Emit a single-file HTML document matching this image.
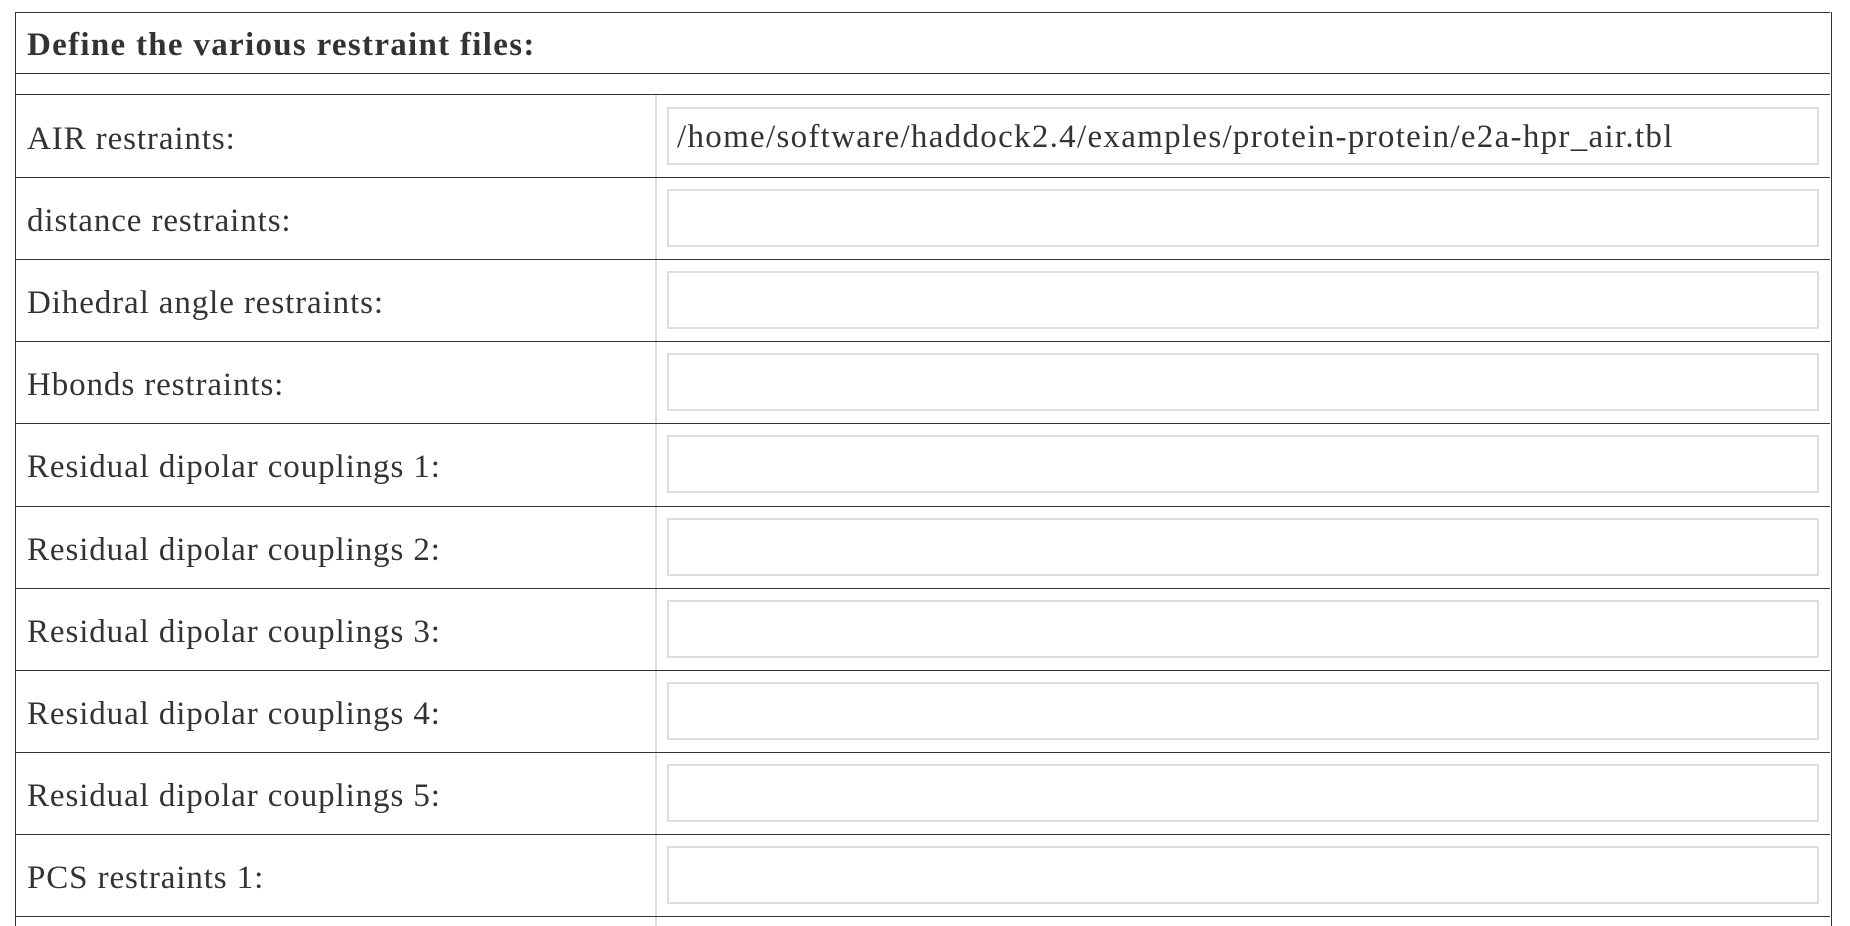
<!DOCTYPE html>
<html><head><style>
html,body{margin:0;padding:0;background:#fff;width:1850px;height:926px;overflow:hidden}
body{font-family:"Liberation Serif",serif;color:#333;position:relative}
.h{position:absolute;left:15px;width:1815px;border-left:1px solid #333;border-right:1px solid #333}
.line{position:absolute;left:15px;width:1815px;height:1px;background:#333}
.lab{position:absolute;left:27px;font-size:33px;line-height:84px;letter-spacing:0.9px;margin-top:2px}
.div{position:absolute;left:655px;width:2px;background:#ddd}
.inp{position:absolute;left:667px;width:1152px;height:58px;border:2px solid #ddd;box-sizing:border-box;font-size:33px;line-height:56px;padding-left:8px;color:#333;letter-spacing:1.3px;white-space:nowrap}
</style></head><body>
<div class="h" style="top:12px;height:914px"></div>
<div class="line" style="top:12px"></div>
<div style="position:absolute;left:27px;top:14px;line-height:62px;font-size:33px;font-weight:bold;letter-spacing:1.3px">Define the various restraint files:</div>
<div class="line" style="top:73px"></div>
<div class="line" style="top:94px"></div>
<div class="div" style="top:95px;height:831px"></div>

<div class="lab" style="top:95px">AIR restraints:</div>
<div class="inp" style="top:107px">/home/software/haddock2.4/examples/protein-protein/e2a-hpr_air.tbl</div>
<div class="line" style="top:177px"></div>

<div class="lab" style="top:177px">distance restraints:</div>
<div class="inp" style="top:189px"></div>
<div class="line" style="top:259px"></div>

<div class="lab" style="top:259px">Dihedral angle restraints:</div>
<div class="inp" style="top:271px"></div>
<div class="line" style="top:341px"></div>

<div class="lab" style="top:341px">Hbonds restraints:</div>
<div class="inp" style="top:353px"></div>
<div class="line" style="top:423px"></div>

<div class="lab" style="top:423px">Residual dipolar couplings 1:</div>
<div class="inp" style="top:435px"></div>
<div class="line" style="top:506px"></div>

<div class="lab" style="top:506px">Residual dipolar couplings 2:</div>
<div class="inp" style="top:518px"></div>
<div class="line" style="top:588px"></div>

<div class="lab" style="top:588px">Residual dipolar couplings 3:</div>
<div class="inp" style="top:600px"></div>
<div class="line" style="top:670px"></div>

<div class="lab" style="top:670px">Residual dipolar couplings 4:</div>
<div class="inp" style="top:682px"></div>
<div class="line" style="top:752px"></div>

<div class="lab" style="top:752px">Residual dipolar couplings 5:</div>
<div class="inp" style="top:764px"></div>
<div class="line" style="top:834px"></div>

<div class="lab" style="top:834px">PCS restraints 1:</div>
<div class="inp" style="top:846px"></div>
<div class="line" style="top:916px"></div>
</body></html>
